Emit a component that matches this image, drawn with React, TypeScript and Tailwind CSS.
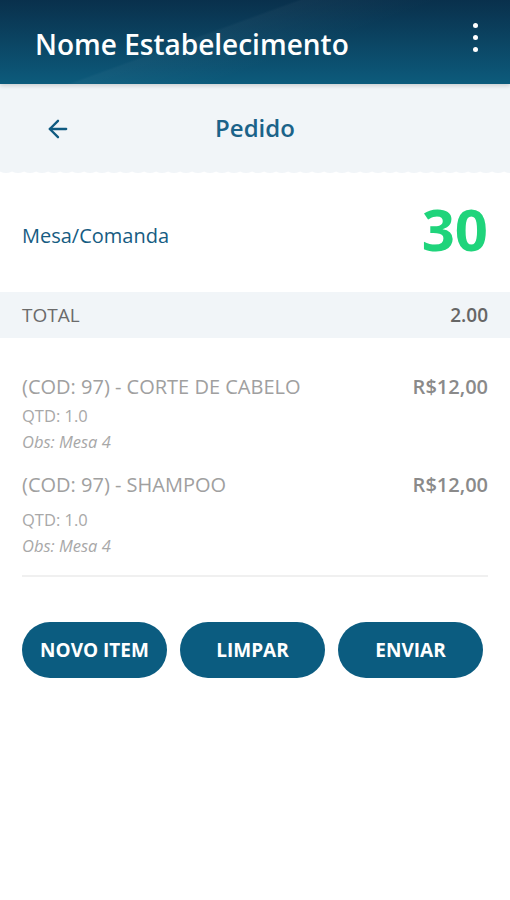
import { ArrowLeft } from "lucide-react";

const items = [
    { name: "(COD: 97) - CORTE DE CABELO", price: "R$12,00", qtd: "QTD: 1.0", obs: "Obs: Mesa 4", gap: "mt-[2px]" },
    { name: "(COD: 97) - SHAMPOO", price: "R$12,00", qtd: "QTD: 1.0", obs: "Obs: Mesa 4", gap: "mt-[8px]" }
];

function Scallop() {
    // little wavy edge under the "Pedido" bar
    const bumps = Array.from({ length: 43 });
    return (
        <svg width="510" height="6" viewBox="0 0 510 6" className="block">
            <rect width="510" height="6" fill="#ffffff" />
            {bumps.map((_, i) => (
                <ellipse key={i} cx={i * 12 + 6} cy="0" rx="7" ry="3" fill="#f1f5f8" />
            ))}
        </svg>
    );
}

export default function App() {
    return (
        <div className="w-[510px] min-h-[900px] bg-white" style={{ fontFamily: '"Open Sans", "Noto Sans", sans-serif' }}>
            <header className="h-[84px] flex items-center justify-between pl-[35px] pr-[32px] bg-gradient-to-b from-[#09304c] to-[#0c5b7c] shadow-[0_2px_4px_rgba(0,0,0,0.15)] relative z-10 overflow-hidden">
                <div className="absolute inset-0 bg-[linear-gradient(160deg,transparent_40%,rgba(255,255,255,0.03)_41%,transparent_60%)]" />
                <h1 className="relative text-[28px] font-semibold text-white mt-[4px]">Nome Estabelecimento</h1>
                <div className="relative flex flex-col gap-[7px] items-center -mt-[10px]">
                    <span className="w-[5px] h-[5px] rounded-full bg-white" />
                    <span className="w-[5px] h-[5px] rounded-full bg-white" />
                    <span className="w-[5px] h-[5px] rounded-full bg-white" />
                </div>
            </header>

            <div className="bg-[#f1f5f8] h-[86px] flex items-center relative">
                <button className="absolute left-[44px] top-[31px] text-[#0f5a80]">
                    <ArrowLeft size={28} strokeWidth={2} />
                </button>
                <h2 className="w-full text-center text-[24px] font-semibold text-[#1b6389] mt-[2px]">Pedido</h2>
            </div>
            <Scallop />

            <div className="flex items-center justify-between px-[22px] h-[116px]">
                <span className="text-[20px] text-[#165c82] mt-[4px]">Mesa/Comanda</span>
                <span className="text-[58px] font-bold text-[#1fd47b] leading-none -mt-[10px]">30</span>
            </div>

            <div className="flex items-center justify-between px-[22px] h-[46px] bg-[#f1f5f8]">
                <span className="text-[19px] text-[#6b6b6b]">TOTAL</span>
                <span className="text-[19px] font-semibold text-[#666666]">2.00</span>
            </div>

            <div className="px-[22px] pt-[35px]">
                {items.map((item, i) => (
                    <div key={i} className="mb-[16px]">
                        <div className="flex justify-between items-start">
                            <span className="text-[20px] text-[#a0a0a0] leading-[28px]">{item.name}</span>
                            <span className="text-[20px] font-semibold text-[#8a8a8a] leading-[28px]">{item.price}</span>
                        </div>
                        <p className={`text-[16.5px] text-[#a8a8a8] leading-[26px] ${item.gap}`}>{item.qtd}</p>
                        <p className="text-[16.5px] italic text-[#a8a8a8] leading-[26px]">{item.obs}</p>
                    </div>
                ))}
                <div className="h-[2px] bg-[#f0f0f0] mt-[4px]" />
            </div>

            <div className="flex gap-[13px] px-[22px] mt-[45px]">
                {["NOVO ITEM", "LIMPAR", "ENVIAR"].map((label) => (
                    <button
                        key={label}
                        className="w-[145px] h-[56px] rounded-full bg-[#0b5c80] text-white text-[19px] font-bold"
                    >
                        {label}
                    </button>
                ))}
            </div>
        </div>
    );
}
